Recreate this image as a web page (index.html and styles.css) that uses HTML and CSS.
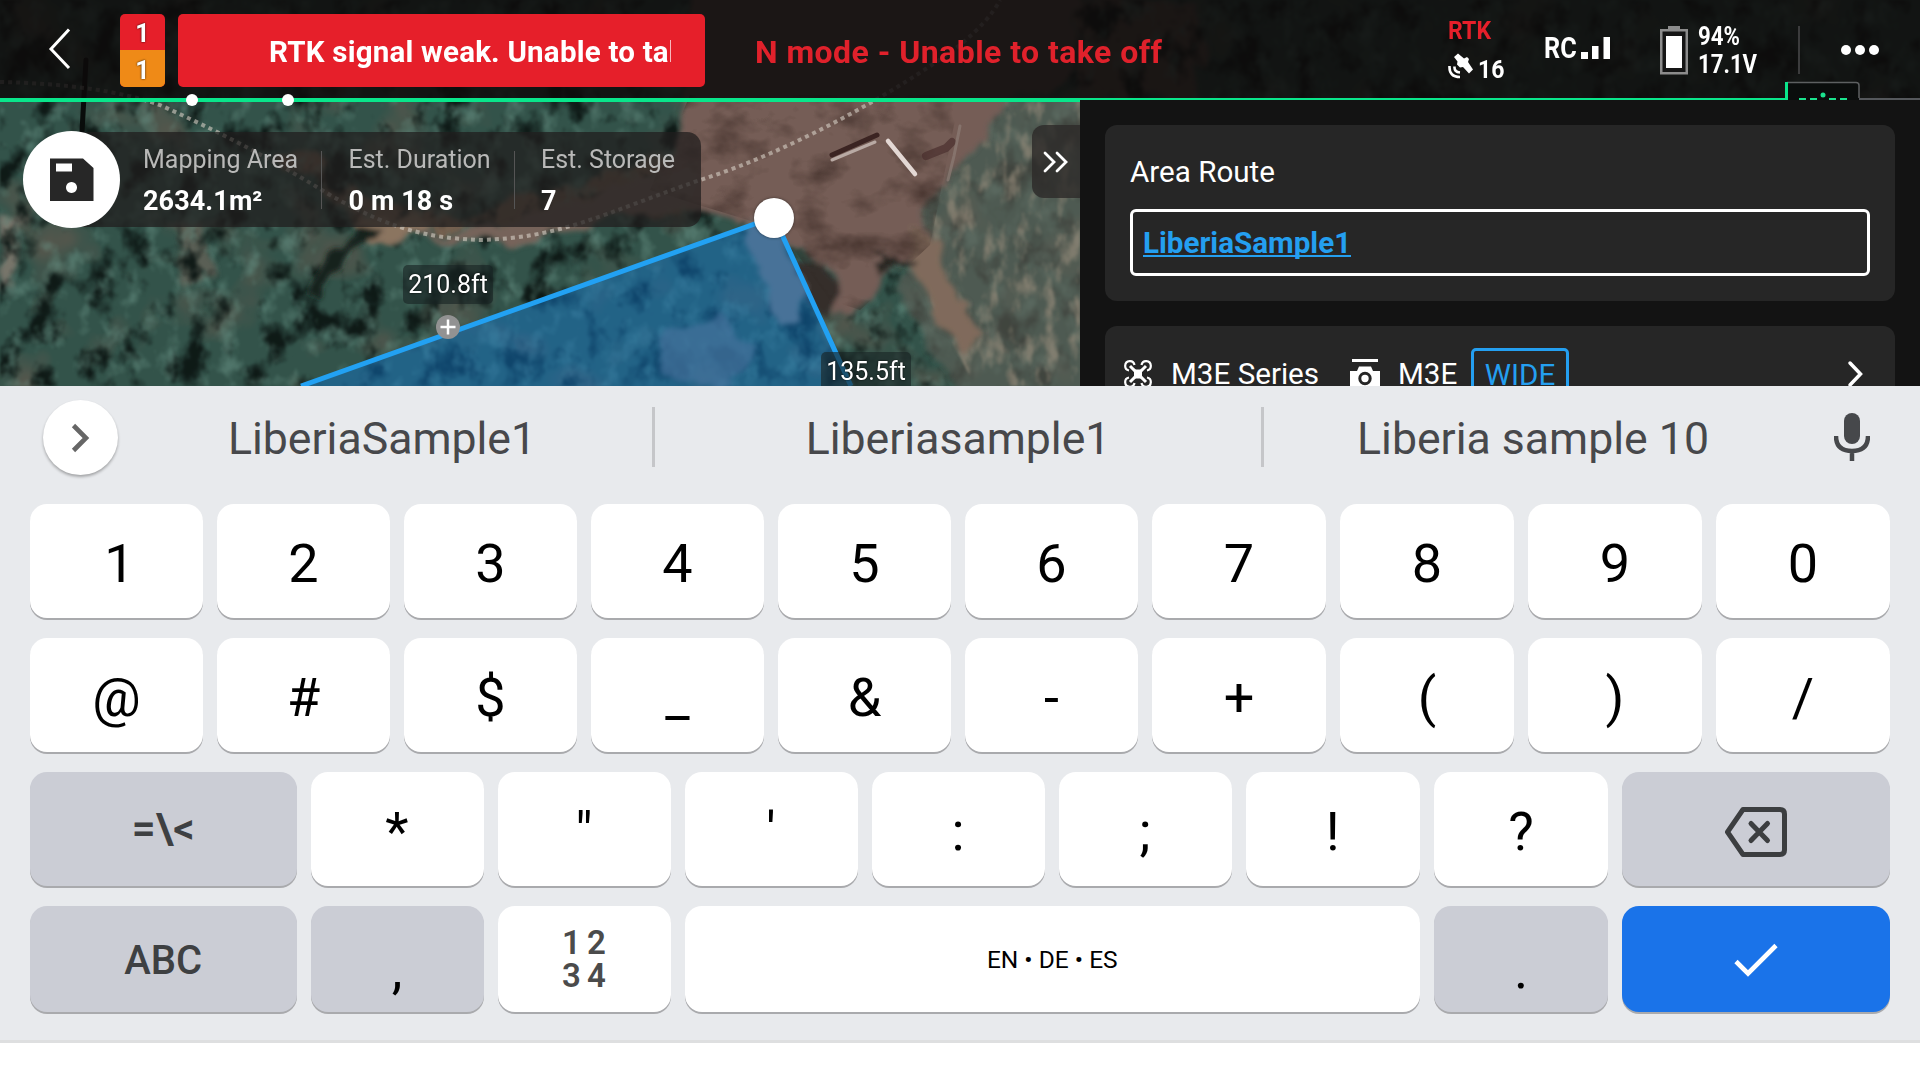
FILE: index.html
```html
<!DOCTYPE html>
<html lang="en">
<head>
<meta charset="utf-8">
<title>Area Route</title>
<link rel="stylesheet" href="styles.css">
</head>
<body>
<main class="app">
  <section class="flight">
    <svg class="terrain" viewBox="0 0 1920 386" width="1920" height="386" aria-hidden="true">
      <defs>
        <filter id="soft" x="-20%" y="-20%" width="140%" height="140%">
          <feTurbulence type="fractalNoise" baseFrequency="0.03" numOctaves="3" seed="4" result="n"/>
          <feDisplacementMap in="SourceGraphic" in2="n" scale="30" xChannelSelector="R" yChannelSelector="G"/>
          <feGaussianBlur stdDeviation="2.500"/>
        </filter>
        <filter id="canopy" x="0" y="0" width="100%" height="100%" color-interpolation-filters="sRGB">
          <feTurbulence type="fractalNoise" baseFrequency="0.034 0.026" numOctaves="4" seed="11"/>
          <feColorMatrix values="0 0 0 0 0.05  0 0 0 0 0.09  0 0 0 0 0.08  4.2 0 0 0 -2.1"/>
          <feGaussianBlur stdDeviation="0.8"/>
        </filter>
        <filter id="leaf" x="0" y="0" width="100%" height="100%" color-interpolation-filters="sRGB">
          <feTurbulence type="fractalNoise" baseFrequency="0.05 0.04" numOctaves="4" seed="29"/>
          <feColorMatrix values="0 0 0 0 0.39  0 0 0 0 0.55  0 0 0 0 0.50  0 3.2 0 0 -1.65"/>
          <feGaussianBlur stdDeviation="0.8"/>
        </filter>
        <filter id="earth" x="0" y="0" width="100%" height="100%" color-interpolation-filters="sRGB">
          <feTurbulence type="fractalNoise" baseFrequency="0.014" numOctaves="3" seed="7"/>
          <feColorMatrix values="0 0 0 0 0.34  0 0 0 0 0.34  0 0 0 0 0.30  0 0 3 0 -1.6"/>
        </filter>
        <filter id="streaks" x="0" y="0" width="100%" height="100%" color-interpolation-filters="sRGB">
          <feTurbulence type="fractalNoise" baseFrequency="0.07 0.03" numOctaves="4" seed="3"/>
          <feColorMatrix values="0 0 0 0 0.62  0 0 0 0 0.57  0 0 0 0 0.50  0 4 0 0 -2" result="s"/>
          <feComposite in="s" in2="SourceAlpha" operator="in"/>
          <feGaussianBlur stdDeviation="0.8"/>
        </filter>
        <filter id="grain" x="0" y="0" width="100%" height="100%" color-interpolation-filters="sRGB">
          <feTurbulence type="fractalNoise" baseFrequency="0.02 0.03" numOctaves="4" seed="17"/>
          <feColorMatrix values="0 0 0 0 0.18  0 0 0 0 0.12  0 0 0 0 0.1  0 2 0 0 -0.95" result="g"/>
          <feComposite in="g" in2="SourceAlpha" operator="in"/>
        </filter>
        <clipPath id="area"><path d="M774 217 301 386H851Z"/></clipPath>
      </defs>
      <rect width="1920" height="386" fill="#33534a"/>
      <rect width="1920" height="386" filter="url(#earth)"/>
      <g filter="url(#soft)">
        <path d="M275 150 345 215 370 245 430 232 560 222 690 205V150L560 185 470 215 380 205 300 150Z" fill="#75604f"/>
        <path d="M1080 0H1200V100H1080Z" fill="#6b5a50"/>
        <path d="M0 215 25 220 15 280 0 290Z" fill="#77756a"/>
        <path d="M170 225 190 290 215 275 200 220Z" fill="#5a5e54"/>
      </g>
      <rect width="1920" height="386" filter="url(#canopy)" opacity=".95"/>
      <rect width="1920" height="386" filter="url(#leaf)" opacity=".6"/>
      <g filter="url(#soft)">
        <path d="M945 90H1100V400H960L900 300 920 220Z" fill="#5d5f55" opacity=".62"/>
      </g>
      <path d="M950 100H1080V386H975L930 300 935 200Z" fill="#fff" filter="url(#streaks)" opacity=".6"/>
      <g filter="url(#soft)">
        <path d="M690 -20H1080V70L1000 108 970 150 925 200 930 245 890 262 860 315 835 310 830 270 780 240 740 220 700 210 650 190 675 150 685 100Z" fill="#745d56"/>
        <path d="M350 222 372 248 430 232 420 215Z" fill="#8b7460"/>
        <path d="M400 238 520 245 600 222 690 200 700 165 600 190 500 225Z" fill="#76635a"/>
        <path d="M745 225 770 223 805 280 800 325 775 320 760 260Z" fill="#7c706c"/>
        <path d="M660 330 720 320 760 350 730 386 660 380Z" fill="#756f73" opacity=".7"/>
        <path d="M915 215 960 290 980 330 960 350 935 310 905 260Z" fill="#806a5b"/>
        <path d="M335 245 355 225 390 230 375 240 345 255 320 300 308 296Z" fill="#17221d"/>
        <path d="M795 262 820 265 837 300 830 315 805 300Z" fill="#342f2b"/>
        <path d="M872 260 890 253 918 261 915 267 890 263 878 275Z" fill="#252522"/>
      </g>
      <path d="M690 95H960L930 245 860 310 830 300 780 230 650 190Z" fill="#fff" filter="url(#grain)" opacity=".7"/>
      <g fill="none" stroke-linecap="round">
        <path d="m832 155 45-20" stroke="#3b2422" stroke-width="5"/>
        <path d="m832 160 43-18" stroke="#b9aaa4" stroke-width="3"/>
        <path d="m888 141 27 33" stroke="#e3d8d4" stroke-width="4.500"/>
        <path d="m926 156 20-8 6-6" stroke="#4a2f2d" stroke-width="8" opacity=".7"/>
        <path d="m960 126-6 30-6 24" stroke="#8d7d76" stroke-width="3" opacity=".7"/>
        <path d="M82 132 86 60" stroke="#090c0b" stroke-width="5"/>
      </g>
      <g fill="none" stroke="#d5cec4" stroke-width="4" stroke-dasharray="4 4" opacity=".6">
        <path d="M0 82Q100 84 160 105C215 130 265 155 330 195C400 235 440 238 480 240C560 238 600 215 700 180C790 152 900 90 960 45Q990 20 1000 0"/>
      </g>
      <g clip-path="url(#area)">
        <path d="M774 217 301 386H851Z" fill="#1176c8" opacity=".48"/>
      </g>
      <path d="M301 386 774 217 851 386" fill="none" stroke="#22a1f3" stroke-width="5"/>
    </svg>

    <header class="topbar">
      <svg class="back" width="30" height="46" viewBox="0 0 30 46"><path d="M25 3.500 7 23 25 42" fill="none" stroke="#fff" stroke-width="3"/></svg>
      <div class="counts"><b class="count">1</b><b class="count count-warn">1</b></div>
      <div class="alert"><span class="alert-text">RTK signal weak. Unable to take off</span></div>
      <strong class="mode">N mode - Unable to take off</strong>
      <div class="status">
        <div class="rtk">
          <span class="rtk-name narrow">RTK</span>
          <span class="sats">
            <svg width="26" height="26" viewBox="0 0 26 26"><g fill="#fff"><path d="m6 4 4-3.500 6 5 3-1.500 2 2-1 3 5 7.500-4 4-6-6.500-3 .5-3-3 .5-3Z"/></g><path d="M6.500 13.500Q6 19 12 19.500M1.500 13Q1 24 12 24" fill="none" stroke="#fff" stroke-width="2.600"/></svg>
            <span class="narrow">16</span>
          </span>
        </div>
        <div class="rc"><span class="narrow rc-name">RC</span><svg width="30" height="22" viewBox="0 0 30 22"><path d="M0 15h7v7H0zM11 9h6.500v13H11zM22.500 0H29v22h-6.500z" fill="#fff"/></svg></div>
        <div class="power">
          <svg width="28" height="50" viewBox="0 0 28 50"><path d="M8 1h12v4H8z" fill="#8c8c8c"/><path d="M1.250 5.250h25.500v43H1.250z" fill="#151515" stroke="#8c8c8c" stroke-width="2.500"/><path d="M6 11h16v32H6z" fill="#fff"/></svg>
          <div class="readings"><span class="narrow">94%</span><span class="narrow">17.1V</span></div>
        </div>
        <i class="bar-divider"></i>
        <svg class="more" width="40" height="12" viewBox="0 0 40 12"><circle cx="6" cy="6" r="5" fill="#fff"/><circle cx="20" cy="6" r="5" fill="#fff"/><circle cx="34" cy="6" r="5" fill="#fff"/></svg>
      </div>
      <svg class="battery-line" width="1920" height="34" viewBox="0 0 1920 34">
        <path d="M1787 8.500h69q3 0 3 3V26h-72Z" fill="#0a0d0c"/>
        <path d="M1787 8.500h69q3 0 3 3V24" fill="none" stroke="#5d6061" stroke-width="1.500"/>
        <path d="M1859 25h61" stroke="#55585c" stroke-width="2"/>
        <path d="M0 24H1080V28H0ZM1080 24H1785V8H1788V26H1080Z" fill="#09e68b"/>
        <path d="M1799 25h7m4 0h7m12 0h7m4 0h7" stroke="#1be38e" stroke-width="2"/><circle cx="1823" cy="21" r="2.500" fill="#1be38e"/>
        <circle cx="192" cy="26" r="6" fill="#fff"/><circle cx="288" cy="26" r="6" fill="#fff"/>
      </svg>
    </header>

    <div class="workspace">
      <div class="map">
        <div class="summary">
          <button class="save" aria-label="Save"><svg width="44" height="44" viewBox="0 0 44 44"><path fill-rule="evenodd" d="M0 .5h33L43.500 10v33H0ZM6 5.500v8h16v-8ZM21.500 24a5.500 5.500 0 1 0 .01 0Z" fill="#272727"/></svg></button>
          <dl class="stats">
            <div class="stat stat-area"><dt>Mapping Area</dt><dd>2634.1m²</dd></div>
            <div class="stat stat-time"><dt>Est. Duration</dt><dd>0 m 18 s</dd></div>
            <div class="stat"><dt>Est. Storage</dt><dd>7</dd></div>
          </dl>
        </div>
        <button class="collapse" aria-label="Collapse"><svg width="26" height="22" viewBox="0 0 26 22"><path d="m2 2 9 9-9 9M14 2l9 9-9 9" fill="none" stroke="#fff" stroke-width="2.800" stroke-linecap="round"/></svg></button>
        <i class="vertex"></i>
        <span class="length length-a">210.8ft</span>
        <span class="length length-b">135.5ft</span>
        <svg class="midpoint" width="24" height="24" viewBox="0 0 24 24"><circle cx="12" cy="12" r="12" fill="#929292"/><path d="M12 4.500v15M4.500 12h15" stroke="#fff" stroke-width="2.500"/></svg>
      </div>
      <aside class="panel">
        <div class="card">
          <label class="card-title" for="route">Area Route</label>
          <div class="field" id="route"><span class="field-text">LiberiaSample1</span></div>
        </div>
        <div class="card device">
          <svg class="drone" width="28" height="28" viewBox="0 0 28 28"><g fill="none" stroke="#fff" stroke-width="2.200"><path d="M5 10.500A4.700 4.700 0 1 1 10.500 5M17.500 5A4.700 4.700 0 1 1 23 10.500M23 17.500A4.700 4.700 0 1 1 17.500 23M10.500 23A4.700 4.700 0 1 1 5 17.500"/><path d="m6 6 5 5M22 6l-5 5M22 22l-5-5M6 22l5-5" stroke-width="3"/></g><path d="m9 8 2.500 1.500h5L19 8l-1 4v4l1 4-2.500-1.500h-5L9 20l1-4v-4Z" fill="#fff"/></svg>
          <span class="device-name">M3E Series</span>
          <svg class="camera" width="30" height="34" viewBox="0 0 30 34"><path d="M2 0h26v3H2z" fill="#fff"/><path d="M0 12h7l2-4.500h12l2 4.500h7v22H0Z" fill="#fff"/><circle cx="15" cy="19.500" r="5.200" fill="#fff" stroke="#262626" stroke-width="3"/></svg>
          <span class="camera-name">M3E</span>
          <span class="lens">WIDE</span>
          <svg class="next" width="18" height="28" viewBox="0 0 18 28"><path d="m3 3 10.500 11L3 25" fill="none" stroke="#fff" stroke-width="3.500" stroke-linecap="round"/></svg>
        </div>
      </aside>
    </div>
  </section>

  <section class="keyboard">
    <div class="suggestions">
      <button class="expand" aria-label="More"><svg width="20" height="30" viewBox="0 0 20 30"><path d="m2.500 2.500 12.500 12.500L2.500 27.500" fill="none" stroke="#666" stroke-width="4.600"/></svg></button>
      <span class="word">LiberiaSample1</span>
      <span class="word word-mid">Liberiasample1</span>
      <span class="word word-last">Liberia sample 10</span>
      <svg class="mic" width="36" height="50" viewBox="0 0 36 50"><rect x="10" y="1" width="16" height="31" rx="8" fill="#46484b"/><path d="M2 24Q2 39 18 39T34 24M18 39V49" fill="none" stroke="#46484b" stroke-width="4.500"/></svg>
    </div>
    <div class="keys">
      <button class="key key-one">1</button><button class="key">2</button><button class="key">3</button><button class="key">4</button><button class="key">5</button><button class="key">6</button><button class="key">7</button><button class="key">8</button><button class="key">9</button><button class="key">0</button>
      <button class="key">@</button><button class="key">#</button><button class="key">$</button><button class="key">_</button><button class="key">&amp;</button><button class="key">-</button><button class="key">+</button><button class="key">(</button><button class="key">)</button><button class="key">/</button>
      <button class="key key-wide key-gray key-symbols">=\&lt;</button><button class="key">*</button><button class="key">"</button><button class="key">'</button><button class="key">:</button><button class="key">;</button><button class="key">!</button><button class="key">?</button>
      <button class="key key-wide key-gray key-icon" aria-label="Delete"><svg width="64" height="52" viewBox="0 0 64 52"><path d="M19 3.500H56Q60.500 3.500 60.500 8V44Q60.500 48.500 56 48.500H19L3.500 26Z" fill="none" stroke="#3c3e40" stroke-width="5" stroke-linejoin="round"/><path d="m27 17.500 16.500 17m0-17L27 34.500" stroke="#3c3e40" stroke-width="5" stroke-linecap="round"/></svg></button>
      <button class="key key-wide key-gray key-abc">ABC</button><button class="key key-gray key-low">,</button>
      <button class="key key-pad"><span>1 2</span><span>3 4</span></button>
      <button class="key key-space">EN • DE • ES</button><button class="key key-gray key-low">.</button>
      <button class="key key-wide key-done key-icon" aria-label="Done"><svg width="44" height="34" viewBox="0 0 44 34"><path d="M2 18.500 14 30.500 42 2.500" fill="none" stroke="#fff" stroke-width="4.600"/></svg></button>
    </div>
  </section>
</main>
</body>
</html>
```
FILE: styles.css
```css
* { box-sizing: border-box; margin: 0; }
body { font-family: Roboto, "Liberation Sans", sans-serif; background: #fff; overflow: hidden; }
button { border: 0; padding: 0; background: none; font: inherit; color: inherit; }
svg { display: block; flex: none; }

.app { width: 1920px; height: 1080px; display: flex; flex-direction: column; }

.flight { position: relative; height: 386px; overflow: hidden; color: #fff; display: flex; flex-direction: column; }
.terrain { position: absolute; inset: 0; }

.topbar { position: relative; flex: none; height: 100px; padding-left: 44px; display: flex; align-items: flex-start; background: rgba(13, 11, 11, .86); z-index: 1; }
.back { margin-top: 26px; }
.counts { width: 45px; height: 73px; margin: 14px 13px 0 46px; border-radius: 5px; overflow: hidden; display: grid; grid-template-rows: 36px 37px; background: #e61f2a; }
.count { display: flex; align-items: center; justify-content: center; font-size: 25px; line-height: 1; font-weight: 700; text-shadow: 0 0 2px #000; padding-top: 3px; }
.count-warn { background: #ef8a17; }
.alert { width: 527px; height: 73px; margin-top: 14px; padding: 0 34px 0 91px; border-radius: 5px; background: #e61f2a; display: flex; align-items: center; }
.alert-text { flex: 1; overflow: hidden; white-space: nowrap; font-size: 29.500px; letter-spacing: .22px; line-height: 44px; font-weight: 700; padding-top: 2px; }
.mode { margin: 30px 0 0 50px; width: 693px; font-size: 32px; letter-spacing: .45px; line-height: 45px; font-weight: 700; color: #e0212b; white-space: nowrap; }
.status { display: flex; height: 100px; }
.narrow { display: block; white-space: nowrap; transform: scaleX(.87); transform-origin: 0 50%; font-weight: 700; }
.rtk { width: 96px; padding-top: 14px; font-size: 26.500px; line-height: 32px; }
.rtk-name { color: #e61f2a; }
.sats { display: flex; align-items: flex-start; gap: 4px; margin-top: 7px; }
.rc { width: 116px; padding-top: 31px; display: flex; font-size: 29px; line-height: 35px; }
.rc-name { width: 37px; }
.rc svg { margin-top: 6px; }
.power { width: 138px; padding-top: 25px; display: flex; gap: 10px; font-size: 25.500px; line-height: 28px; }
.readings { margin-top: -3px; }
.bar-divider { width: 2px; height: 48px; margin-top: 26px; background: #3c3c3d; }
.more { margin: 44px 0 0 40px; }
.battery-line { position: absolute; left: 0; top: 74px; }

.workspace { position: relative; flex: 1; display: flex; }
.map { position: relative; width: 1080px; z-index: 1; }
.summary { position: absolute; left: 23px; top: 31px; display: flex; align-items: center; }
.save { width: 97px; height: 97px; border-radius: 50%; background: #fff; display: flex; align-items: center; justify-content: center; z-index: 1; }
.stats { width: 630px; height: 95px; margin-left: -49px; padding-left: 72px; border-radius: 0 14px 14px 0; background: rgba(32, 30, 30, .74); display: flex; align-items: center; }
.stat { height: 58px; margin-right: 26px; white-space: nowrap; }
.stat-area { width: 180px; border-right: 1px solid #555; }
.stat-time { width: 167px; border-right: 1px solid #555; }
.stat dt { font-size: 25px; line-height: 28px; margin-top: -5px; color: #b9b9b8; }
.stat dd { font-size: 27px; line-height: 32px; margin-top: 11px; font-weight: 700; letter-spacing: .1px; }
.collapse { position: absolute; left: 1032px; top: 25px; width: 48px; height: 73px; padding-left: 11px; border-radius: 12px 0 0 12px; background: rgba(45, 43, 41, .82); display: flex; align-items: center; }
.vertex { position: absolute; left: 754px; top: 98px; width: 40px; height: 40px; border-radius: 50%; background: #fff; box-shadow: 0 0 3px rgba(0, 0, 0, .5); }
.length { position: absolute; width: 90px; height: 39px; border-radius: 5px; background: rgba(25, 35, 35, .62); font-size: 25px; line-height: 40px; text-align: center; text-shadow: 0 0 2px #000; }
.length-a { left: 403px; top: 165px; }
.length-b { left: 821px; top: 252px; }
.midpoint { position: absolute; left: 436px; top: 215px; }

.panel { width: 840px; padding: 25px 25px 0; background: #131313; display: flex; flex-direction: column; gap: 25px; }
.card { flex: none; height: 176px; padding: 27px 25px; border-radius: 12px; background: #262626; }
.card-title { display: block; font-size: 29.600px; line-height: 40px; }
.field { height: 67px; margin-top: 17px; padding: 0 10px; border: 3px solid #fff; border-radius: 6px; display: flex; align-items: center; }
.field-text { font-size: 29.600px; font-weight: 700; line-height: 33px; color: #249ff0; border-bottom: 2px solid #249ff0; height: 30px; margin-top: -2px; }
.device { display: flex; align-items: flex-start; padding: 0 0 0 19px; font-size: 29.600px; line-height: 33px; }
.drone { margin-top: 34px; }
.device-name { width: 148px; margin: 32px 31px 0 19px; white-space: nowrap; }
.camera { margin-top: 33px; }
.camera-name { width: 59px; margin: 32px 14px 0 18px; }
.lens { width: 98px; height: 52px; margin-top: 22px; border: 3px solid #249ff0; border-radius: 5px; color: #249ff0; text-align: center; line-height: 48px; }
.next { margin: 34px 0 0 278px; }

.keyboard { height: 657px; background: #e8eaed; border-bottom: 3px solid #dedfe0; display: flex; flex-direction: column; color: #000; }
.suggestions { flex: none; height: 118px; padding: 14px 49px 0 43px; display: flex; align-items: flex-start; }
.expand { width: 75px; height: 75px; border-radius: 50%; background: #fff; box-shadow: 0 2px 3px rgba(0, 0, 0, .3); display: flex; align-items: center; justify-content: center; }
.word { width: 537px; height: 60px; margin-top: 7px; border-right: 3px solid #c5c6c9; font-size: 44.600px; line-height: 65px; text-align: center; color: #47484b; white-space: nowrap; padding-right: 6px; }
.word-mid { width: 609px; padding: 0; }
.word-last { width: 570px; padding: 0 32px 0 0; border: 0; }
.mic { margin-top: 12px; }
.keys { display: grid; grid-template-columns: repeat(13, 79.500px) 80.500px repeat(6, 80px); grid-template-rows: repeat(3, 114px) 106px; gap: 20px 14px; padding: 0 30px; }
.key { grid-column: span 2; padding-top: 5px; border-radius: 17px; background: #fff; box-shadow: 0 2px 0 #a9aaad; font-size: 54px; line-height: 1; display: flex; align-items: center; justify-content: center; }
.key-one { padding-left: 6px; }
.key-wide { grid-column: span 3; }
.key-gray { background: #cbcdd5; }
.key-symbols { font-size: 42px; font-weight: 600; color: #3e4042; padding: 0; }
.key-abc { font-size: 40px; font-weight: 500; color: #3e4042; padding-top: 3px; }
.key-low { padding-top: 21px; }
.key-icon { padding: 0; }
.key-icon svg { margin-top: 5px; }
.key-pad { flex-direction: column; padding: 0; font-size: 33px; line-height: 33px; font-weight: 600; color: #4b4b4b; word-spacing: -2px; }
.key-space { grid-column: span 8; font-size: 24.500px; padding-top: 2px; }
.key-done { background: #1a73e9; }
.key-done svg { margin-top: 1px; }
```
